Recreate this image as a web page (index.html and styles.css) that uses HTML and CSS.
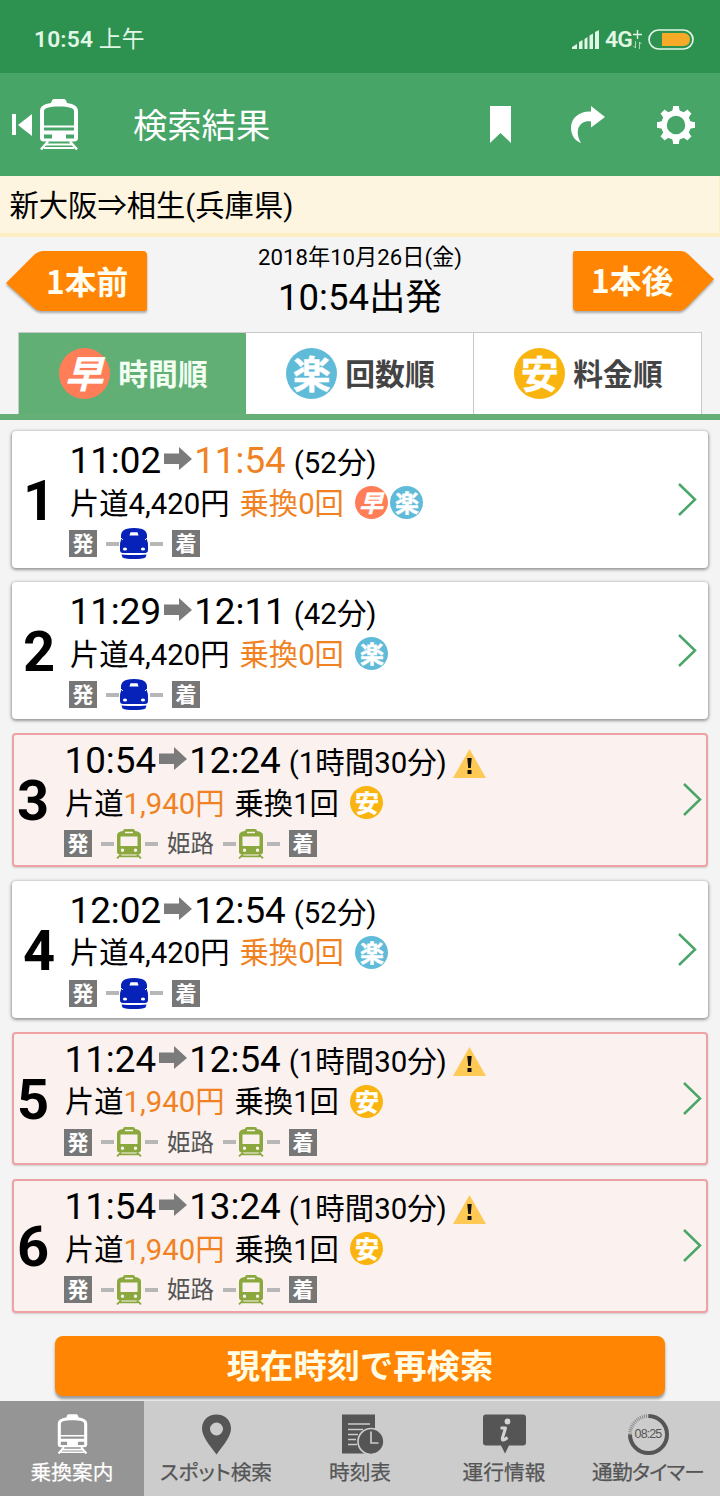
FILE: index.html
```html
<!DOCTYPE html>
<html lang="ja">
<head>
<meta charset="utf-8">
<meta name="viewport" content="width=device-width">
<title>検索結果</title>
<link rel="stylesheet" href="styles.css">
</head>
<body>
<svg class="defs" aria-hidden="true">
  <symbol id="loco" viewBox="0 0 40 52">
    <path fill="currentColor" fill-rule="evenodd" d="M12 4L13 1.500Q13.500 0 15 0H25Q26.500 0 27 1.500L28 4C35 5 39 7.500 39 12V39Q39 42.500 35 42.500H5Q1 42.500 1 39V12C1 7.500 5 5 12 4ZM5 12V26.500H35V12C35 9 30 7.500 20 7.500S5 9 5 12ZM5 28.500V31.500H35V28.500ZM5 35.500V39.500H13V35.500ZM27 35.500V39.500H35V35.500Z"/>
    <path fill="none" stroke="currentColor" stroke-width="2.600" d="M9 42.500L2 50.500M31 42.500L38 50.500"/>
    <path fill="none" stroke="currentColor" stroke-width="2" d="M7 45.500H33M5 49H35"/>
  </symbol>
  <symbol id="local" viewBox="0 0 26 30">
    <path fill="currentColor" fill-rule="evenodd" d="M7 2Q7 0 9 0H17Q19 0 19 2C23 2.500 25 4 25 6.500V22.500Q25 25.500 22 25.500H4Q1 25.500 1 22.500V6.500C1 4 3 2.500 7 2ZM9 2.800V4.300H17V2.800ZM4.500 7.500V17H21.500V7.500ZM6.500 19.500A1.700 1.700 0 1 0 6.500 22.900A1.700 1.700 0 1 0 6.500 19.500ZM19.500 19.500A1.700 1.700 0 1 0 19.500 22.900A1.700 1.700 0 1 0 19.500 19.500Z"/>
    <path fill="none" stroke="currentColor" stroke-width="1.800" d="M5 25.500L1 29.300M21 25.500L25 29.300M4 27.400H22"/>
  </symbol>
  <symbol id="shinkansen" viewBox="0 0 28 31">
    <path fill="#0622b9" d="M6 1Q14-.8 22 1Q26.500 2.500 27 7V12Q28 14 28 18V22Q28 25 25 25H3Q0 25 0 22V18Q0 14 1 12V7Q1.500 2.500 6 1ZM1.500 26.500Q14 27.500 26.500 26.500L25.500 29.500Q22 31 14 31T2.500 29.500Z"/>
    <path fill="#fff" d="M10.500 4.300H17.500L18.500 7.500H9.500Z"/>
    <path d="M.8 10L3 12M27.200 10L25 12" stroke="#fff" stroke-width="1"/>
    <ellipse cx="5" cy="21" rx="2.100" ry="1.600" fill="#fff"/><ellipse cx="23" cy="21" rx="2.100" ry="1.600" fill="#fff"/>
  </symbol>
  <symbol id="arrow" viewBox="0 0 28 24"><path fill="#7b7b7b" d="M0 6.500H15V0L28 12L15 23V17H0Z"/></symbol>
  <symbol id="chevron" viewBox="0 0 19 33"><path fill="none" stroke="#4aa668" stroke-width="2.500" d="M1 1L17 16.500L1 32"/></symbol>
  <symbol id="warn" viewBox="0 0 33 29"><path fill="#ffc956" d="M16.500 0L33 29H0Z"/><path fill="#111" d="M14.300 9H18.700L17.800 19H15.200ZM14.500 21H18.500V25H14.500Z"/></symbol>
</svg>

<header class="status">
  <div class="clock"><b>10:54</b> 上午</div>
  <svg class="signal" width="27" height="19" viewBox="0 0 27 19" fill="#e1f7e6"><path d="M0 19V17L5 14V19ZM7 19V12L10.500 10V19ZM12.500 19V9L15.500 7V19ZM17.500 19V5.500L21 3.500V19ZM23 19V2L27 0V19Z"/></svg>
  <b class="net">4G</b>
  <svg class="data" width="9" height="19" viewBox="0 0 9 19" fill="none" stroke="#e1f7e6"><path stroke-width="1.400" d="M4.500 0V9M0 4.500H9"/><path opacity=".7" d="M2.500 11V18L0 15.500M6.500 19V12L8.500 14"/></svg>
  <svg class="battery" width="46" height="21" viewBox="0 0 46 21"><rect x="1" y="1" width="44" height="19" rx="9.500" fill="none" stroke="#e1f7e6" stroke-width="1.700"/><path fill="#f7a928" d="M14 4H36Q42 5 42 10.500T36 17H14Z"/></svg>
</header>

<div class="appbar">
  <svg class="back" width="20" height="22" viewBox="0 0 20 22" fill="#fff"><path d="M0 0H4V21H0ZM20 0V22L6 11Z"/></svg>
  <svg class="appicon"><use href="#loco"/></svg>
  <h1>検索結果</h1>
  <svg width="21" height="37" viewBox="0 0 21 37"><path fill="#fff" d="M0 0H21V37L10.500 27L0 37Z"/></svg>
  <svg class="share" width="34" height="37" viewBox="0 0 34 37"><path fill="#fff" d="M20 0L34 11L20 21.500V15.500C8 14 3 25 10 37C4 35 0 29 0 22C0 12 8 5 20 5.500Z"/></svg>
  <svg class="gear" width="38" height="38" viewBox="-19 -19 38 38"><circle r="12" fill="none" stroke="#fff" stroke-width="5.500"/><g fill="#fff"><path id="tooth" d="M-4-13L-3-17.500V-19H3V-17.500L4-13Z"/><use href="#tooth" transform="rotate(45)"/><use href="#tooth" transform="rotate(90)"/><use href="#tooth" transform="rotate(135)"/><use href="#tooth" transform="rotate(180)"/><use href="#tooth" transform="rotate(225)"/><use href="#tooth" transform="rotate(270)"/><use href="#tooth" transform="rotate(315)"/></g></svg>
</div>

<div class="route">新大阪⇒相生(兵庫県)</div>

<section class="when">
  <div class="step prev"><svg width="141" height="60" viewBox="0 0 141 60"><path fill="#ff8502" d="M0 32L29 3Q33 0 37 0H137Q141 0 141 4V58Q141 60 139 60H35Q31 60 28 57Z"/></svg><span>1本前</span></div>
  <div class="departure"><div class="date">2018年10月26日(金)</div><div class="time">10:54出発</div></div>
  <div class="step next"><svg width="141" height="60" viewBox="0 0 141 60"><path fill="#ff8502" d="M141 28L115 55Q110 60 106 60H4Q0 60 0 56V2Q0 0 2 0H108Q112 0 115 3Z"/></svg><span>1本後</span></div>
</section>

<nav class="tabs">
  <div class="tab active"><i class="mark fast">早</i><span>時間順</span></div>
  <div class="tab"><i class="mark easy">楽</i><span>回数順</span></div>
  <div class="tab"><i class="mark cheap">安</i><span>料金順</span></div>
</nav>

<main class="results">
  <article class="card">
    <div class="rank">1</div>
    <div class="info">
      <div class="times">11:02<svg class="arrow"><use href="#arrow"/></svg><span class="hl">11:54</span><small>(52分)</small></div>
      <div class="fare"><span>片道4,420円</span><span class="hl">乗換0回</span><i class="mark fast">早</i><i class="mark easy">楽</i></div>
      <div class="legs"><b class="tag">発</b><i class="dash"></i><svg class="bullet"><use href="#shinkansen"/></svg><i class="dash"></i><b class="tag">着</b></div>
    </div>
    <svg class="chevron"><use href="#chevron"/></svg>
  </article>
  <article class="card">
    <div class="rank">2</div>
    <div class="info">
      <div class="times">11:29<svg class="arrow"><use href="#arrow"/></svg>12:11<small>(42分)</small></div>
      <div class="fare"><span>片道4,420円</span><span class="hl">乗換0回</span><i class="mark easy">楽</i></div>
      <div class="legs"><b class="tag">発</b><i class="dash"></i><svg class="bullet"><use href="#shinkansen"/></svg><i class="dash"></i><b class="tag">着</b></div>
    </div>
    <svg class="chevron"><use href="#chevron"/></svg>
  </article>
  <article class="card alert">
    <div class="rank">3</div>
    <div class="info">
      <div class="times">10:54<svg class="arrow"><use href="#arrow"/></svg>12:24<small>(1時間30分)</small><svg class="warn"><use href="#warn"/></svg></div>
      <div class="fare"><span>片道<span class="hl">1,940円</span></span><span>乗換1回</span><i class="mark cheap">安</i></div>
      <div class="legs"><b class="tag">発</b><i class="dash"></i><svg class="local"><use href="#local"/></svg><i class="dash"></i><span class="via">姫路</span><i class="dash"></i><svg class="local"><use href="#local"/></svg><i class="dash"></i><b class="tag">着</b></div>
    </div>
    <svg class="chevron"><use href="#chevron"/></svg>
  </article>
  <article class="card">
    <div class="rank">4</div>
    <div class="info">
      <div class="times">12:02<svg class="arrow"><use href="#arrow"/></svg>12:54<small>(52分)</small></div>
      <div class="fare"><span>片道4,420円</span><span class="hl">乗換0回</span><i class="mark easy">楽</i></div>
      <div class="legs"><b class="tag">発</b><i class="dash"></i><svg class="bullet"><use href="#shinkansen"/></svg><i class="dash"></i><b class="tag">着</b></div>
    </div>
    <svg class="chevron"><use href="#chevron"/></svg>
  </article>
  <article class="card alert">
    <div class="rank">5</div>
    <div class="info">
      <div class="times">11:24<svg class="arrow"><use href="#arrow"/></svg>12:54<small>(1時間30分)</small><svg class="warn"><use href="#warn"/></svg></div>
      <div class="fare"><span>片道<span class="hl">1,940円</span></span><span>乗換1回</span><i class="mark cheap">安</i></div>
      <div class="legs"><b class="tag">発</b><i class="dash"></i><svg class="local"><use href="#local"/></svg><i class="dash"></i><span class="via">姫路</span><i class="dash"></i><svg class="local"><use href="#local"/></svg><i class="dash"></i><b class="tag">着</b></div>
    </div>
    <svg class="chevron"><use href="#chevron"/></svg>
  </article>
  <article class="card alert">
    <div class="rank">6</div>
    <div class="info">
      <div class="times">11:54<svg class="arrow"><use href="#arrow"/></svg>13:24<small>(1時間30分)</small><svg class="warn"><use href="#warn"/></svg></div>
      <div class="fare"><span>片道<span class="hl">1,940円</span></span><span>乗換1回</span><i class="mark cheap">安</i></div>
      <div class="legs"><b class="tag">発</b><i class="dash"></i><svg class="local"><use href="#local"/></svg><i class="dash"></i><span class="via">姫路</span><i class="dash"></i><svg class="local"><use href="#local"/></svg><i class="dash"></i><b class="tag">着</b></div>
    </div>
    <svg class="chevron"><use href="#chevron"/></svg>
  </article>
</main>

<button class="again">現在時刻で再検索</button>

<nav class="bottom">
  <div class="item on"><svg width="31" height="40"><use href="#loco"/></svg><span>乗換案内</span></div>
  <div class="item"><svg width="29" height="40" viewBox="0 0 29 40"><path fill="#555" fill-rule="evenodd" d="M14.500 0C23 0 29 6 29 14C29 22 22 30 14.500 40C7 30 0 22 0 14C0 6 6 0 14.500 0ZM14.500 8A6.500 6.500 0 1 0 14.500 21A6.500 6.500 0 1 0 14.500 8Z"/></svg><span>スポット検索</span></div>
  <div class="item"><svg class="sheet" width="42" height="40" viewBox="0 0 42 40"><path fill="#555" d="M0 0H33V39H0Z"/><path stroke="#ccc" stroke-width="1.700" d="M6 9.500H28M6 15H21M6 20H16M6 25H14M6 30H15"/><circle cx="29" cy="27" r="13" fill="#555" stroke="#ccc" stroke-width="1.700"/><path d="M29 17V28.500H36.500" fill="none" stroke="#ccc" stroke-width="1.700"/></svg><span>時刻表</span></div>
  <div class="item"><svg width="43" height="40" viewBox="0 0 43 40"><path fill="#555" d="M3 0H40Q43 0 43 3V28Q43 31 40 31H26L22 39L18 31H3Q0 31 0 28V3Q0 0 3 0Z"/><circle cx="24.500" cy="7" r="2.900" fill="#d4d4d4"/><path d="M17.500 13.500H22.500L19.300 24Q19 27.500 24.500 23" fill="none" stroke="#d4d4d4" stroke-width="3" stroke-linejoin="round"/></svg><span>運行情報</span></div>
  <div class="item"><div class="timer"><svg width="41" height="41" viewBox="0 0 41 41"><circle cx="20.500" cy="20.500" r="18.500" fill="none" stroke="#888" stroke-width="3.500" stroke-dasharray="1 1"/><path d="M20.500 2A18.500 18.500 0 1 1 2 20.500" fill="none" stroke="#555" stroke-width="4"/></svg><div class="digits">08:25</div></div><span class="tight">通勤タイマー</span></div>
</nav>
</body>
</html>
```

FILE: styles.css
```css
* { box-sizing: border-box; }
body {
  margin: 0;
  width: 720px;
  height: 1496px;
  display: flex;
  flex-direction: column;
  overflow: hidden;
  background: #f4f4f4;
  color: #000;
  font-family: Roboto, "Noto Sans CJK JP", sans-serif;
}
svg { display: block; flex: none; }
i { font-style: normal; }
.defs { position: absolute; width: 0; height: 0; }

.status {
  height: 73px;
  flex: none;
  display: flex;
  align-items: center;
  padding: 6px 26px 0 34px;
  background: #2d9150;
  color: #e1f7e6;
  font-size: 22.8px;
  line-height: 30px;
}
.clock { flex: 1; letter-spacing: .15px; }
.status b { font-weight: 600; }
.net { width: 27px; margin-left: 6px; letter-spacing: -.8px; }
.data { margin: 0 6px 0 1px; }

.appbar {
  height: 103px;
  flex: none;
  display: flex;
  align-items: center;
  padding: 0 25px 0 12px;
  background: #47a667;
}
.appicon { width: 40px; height: 52px; color: #fff; margin: 1px 0 0 7px; }
.appbar h1 {
  flex: 1;
  margin: 2px 0 0 54px;
  color: #fff;
  font-size: 34.3px;
  font-weight: 400;
  line-height: 44px;
}
.share { margin: 0 52px 0 60px; }

.route {
  height: 61px;
  flex: none;
  padding: 0 9.5px;
  background: #fdf5e0;
  border: solid #fbeec2;
  border-width: 0 1px 4px 0;
  font-size: 29.3px;
  line-height: 61px;
}

.when {
  height: 95px;
  flex: none;
  display: flex;
  justify-content: space-between;
  padding: 0 6px;
}
.step {
  position: relative;
  width: 141px;
  height: 60px;
  margin-top: 14px;
  color: #fffdf0;
  font: 700 31.8px/58px "Noto Sans CJK JP", sans-serif;
}
.step svg { position: absolute; inset: 0; filter: drop-shadow(0 2px 1px #aaa); }
.step span { position: relative; display: block; white-space: nowrap; }
.prev span { padding-left: 40px; }
.next span { padding-left: 18px; line-height: 56px; }
.departure { text-align: center; }
.date { font-size: 22.2px; line-height: 40px; }
.time { font-size: 36.5px; line-height: 41px; }

.tabs {
  height: 88px;
  flex: none;
  display: flex;
  padding: 0 18px;
  border-bottom: 6px solid #66b078;
}
.tab {
  flex: 1;
  display: flex;
  align-items: center;
  justify-content: center;
  gap: 8px;
  padding-left: 2px;
  background: #fff;
  border: solid #c9c9c9;
  border-width: 1px 1px 0 0;
  color: #444;
  font: 700 29.8px/40px "Noto Sans CJK JP", sans-serif;
}
.tab span { margin-top: -4px; }
.tab.active { background: #62af75; color: #f2fff2; border-left-width: 1px; border-right: 0; }
.mark {
  flex: none;
  width: 33px;
  height: 33px;
  border-radius: 50%;
  color: #fff;
  font: 700 24px/31px "Noto Sans CJK JP", sans-serif;
  text-align: center;
  -webkit-text-stroke: .4px #fff;
}
.tab .mark { width: 51px; height: 51px; font-size: 38px; line-height: 47px; }
.fast { background: #ff7d57; font-style: italic; text-indent: -2px; }
.easy { background: #60bbd9; }
.cheap { background: #f9b40f; }

.results { display: flex; flex-direction: column; gap: 14px; padding: 11px 12px 0; }
.card {
  height: 137px;
  display: flex;
  padding-top: 10px;
  background: #fff;
  border-radius: 4px;
  box-shadow: 0 1px 3px 1px #999;
}
.rank { width: 54px; flex: none; font-size: 56px; font-weight: 700; line-height: 121px; text-align: center; }
.info { width: 600px; flex: none; padding-left: 3px; }
.chevron { width: 19px; height: 33px; margin-top: 42px; margin-left: 12px; }
.hl { color: #f08223; }
.times { height: 40px; display: flex; align-items: baseline; padding-left: .5px; font-size: 36.8px; line-height: 40px; }
.arrow { width: 28px; height: 24px; margin: 0 2px 0 3px; align-self: center; position: relative; top: -2px; }
.times small { font-size: 29.4px; margin-left: 8px; }
.warn { width: 33px; height: 29px; margin: 0 0 0 6px; align-self: center; position: relative; top: 2px; }
.fare { height: 46px; display: flex; align-items: center; padding-left: 1px; font-size: 29.3px; line-height: 47px; }
.fare > span + span { margin-left: 10px; }
.fare .mark { margin-left: 2px; margin-top: -3px; }
.fare span + .mark { margin-left: 11.5px; }
.legs { height: 33px; display: flex; align-items: center; }
.tag {
  width: 28px;
  height: 27px;
  background: #777;
  color: #fff;
  font: 700 21px/25px "Noto Sans CJK JP", sans-serif;
  text-align: center;
}
.dash { width: 13px; height: 4px; background: #b7b7b7; }
.tag + .dash { margin-left: 9px; }
.dash + .tag { margin-left: 9px; }
.bullet { width: 28px; height: 31px; margin: 0 2px 0 1px; }
.local { width: 26px; height: 30px; margin: 0 3px 0 2px; color: #8aa83e; }
.via { margin: 0 9px; color: #555; font-size: 23.5px; line-height: 33px; padding-top: 2px; }

.alert { height: 133.600px; padding-top: 6px; background: #fbf2f0; border: 2px solid #efa2a4; box-shadow: 0 1px 2px #ccc; }
.alert .rank { width: 38px; }
.alert .info { padding-left: 12px; }
.alert .chevron { margin-left: 31px; }

.again {
  width: 610px;
  height: 60px;
  flex: none;
  margin: 23px 0 0 55px;
  padding: 0 0 4px;
  border: 0;
  border-radius: 8px;
  background: #ff8502;
  box-shadow: 0 3px 3px #999;
  color: #fffde8;
  font: 700 33.3px/56px "Noto Sans CJK JP", sans-serif;
}
.bottom { height: 95px; flex: none; margin-top: auto; display: flex; background: #ccc; color: #555; position: relative; }
.item { width: 144px; display: flex; flex-direction: column; align-items: center; padding-top: 13px; }
.item span { font: 400 20.7px/30px "Noto Sans CJK JP", sans-serif; font-feature-settings: "palt"; margin-top: 1px; white-space: nowrap; -webkit-text-stroke: .25px currentColor; }
.item .tight { letter-spacing: -.8px; }
.item svg { height: 41px; }
.item.on { background: #959595; color: #fff; }
.sheet { margin-left: 5px; }
.timer { position: relative; width: 41px; height: 41px; }
.digits {
  position: absolute;
  inset: 0;
  font: 500 12.5px/41px "Liberation Sans", sans-serif;
  letter-spacing: -.9px;
  text-align: center;
}
```
